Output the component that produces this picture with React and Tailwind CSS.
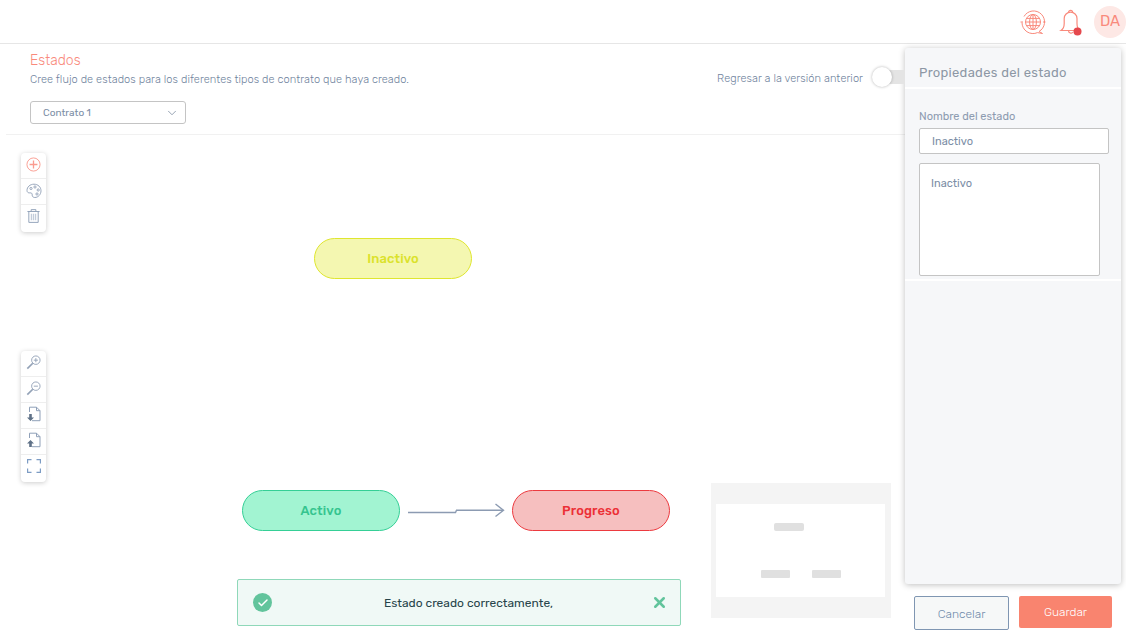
import { Check, ChevronDown, X } from "lucide-react";

const font = { fontFamily: "Rubik, Roboto, sans-serif" };

const GlobeIcon = () => (
  <svg width="26" height="26" viewBox="0 0 26 26" fill="none" stroke="#f98a7c" strokeWidth="1">
    <path d="M4 7.5 A11 11 0 1 1 19 22.5 L22.5 24.5 L17.5 23.6 A11 11 0 0 1 2 13.5" />
    <circle cx="13" cy="13" r="7.5" />
    <ellipse cx="13" cy="13" rx="3.4" ry="7.5" />
    <path d="M13 5.5v15M5.5 13h15M6.6 9.4h12.8M6.6 16.6h12.8M0.5 13h2.5M23 13h2.5" />
  </svg>
);

const BellIcon = () => (
  <svg width="24" height="28" viewBox="0 0 24 28" fill="none">
    <path d="M2 22.5c2.4-1.6 3.2-3.8 3.2-7V10.5a6.4 6.4 0 0 1 12.8 0v5c0 3 .8 5.4 2.8 7z" stroke="#f98a7c" strokeWidth="1.2" />
    <path d="M9.6 4.4a2 2 0 0 1 4 0M9.5 22.5a2.5 2.5 0 0 0 4.6 1.5" stroke="#f98a7c" strokeWidth="1.2" />
    <circle cx="18.5" cy="23.5" r="4" fill="#e5484d" />
  </svg>
);

const PlusIcon = () => (
  <svg width="15" height="15" viewBox="0 0 16 16" fill="none" stroke="#fa9c90" strokeWidth="1">
    <circle cx="8" cy="8" r="7" />
    <path d="M8 3.8v8.4M3.8 8h8.4" strokeWidth="1.4" />
  </svg>
);

const PaletteIcon = () => (
  <svg width="16" height="16" viewBox="0 0 16 16" fill="none" stroke="#9aa8bd" strokeWidth="1">
    <path d="M8 1.2c-4 0-7 2.7-7 6.3 0 1.8 1.4 2.6 2.8 2.4 1.6-.2 2.6.5 2.4 2-.1 1.4.8 2.6 2.6 2.6 3.4 0 6.2-3 6.2-6.7 0-3.7-2.9-6.6-7-6.6z" />
    <circle cx="5" cy="5.5" r="1.1" />
    <circle cx="9" cy="4" r="1.1" />
    <circle cx="12.2" cy="7" r="1.1" />
    <circle cx="11" cy="11" r="1.1" />
  </svg>
);

const TrashIcon = () => (
  <svg width="15" height="16" viewBox="0 0 16 16" fill="none" stroke="#8fa0b8" strokeWidth="1" className="-translate-y-px">
    <path d="M1.5 3.2h13M5.5 3V1.2h5V3M3 3.2v11.6h10V3.2" />
    <path d="M5.8 5.5v7M8 5.5v7M10.2 5.5v7" strokeWidth="1.4" stroke="#c2ccda" />
  </svg>
);

const ZoomIcon = ({ plus }) => (
  <svg width="15" height="15" viewBox="0 0 16 16" fill="none" stroke="#93a2b7" strokeWidth="1">
    <circle cx="10.5" cy="5.5" r="4.5" />
    <path d="M7.2 8.8 1.4 14.6" strokeWidth="1.8" />
    <path d="M8.3 5.5h4.4" />
    {plus && <path d="M10.5 3.3v4.4" />}
  </svg>
);

const FileArrowIcon = ({ up }) => (
  <svg width="16" height="16" viewBox="0 0 16 16" fill="none" className="-translate-y-px">
    <path d="M3.5 6V1.2h7l3.5 3.5v10H6M10.5 1.2v3.5H14" stroke="#8fa0b8" strokeWidth="1" />
    {up ? (
      <path d="M4.5 8 1 11.5h2.2V15h2.6v-3.5H8z" fill="#5f7187" />
    ) : (
      <path d="M4.5 15 1 11.5h2.2V8h2.6v3.5H8z" fill="#5f7187" />
    )}
  </svg>
);

const FitIcon = () => (
  <svg width="14" height="14" viewBox="0 0 14 14" fill="none" stroke="#7d9cc4" strokeWidth="1.2" className="-translate-y-px">
    <path d="M.6 4.5V.6h3.9M9.5.6h3.9v3.9M13.4 9.5v3.9H9.5M4.5 13.4H.6V9.5" />
  </svg>
);

const Toolbar = ({ className, items }) => (
  <div className={`absolute left-[21px] flex w-[25px] flex-col rounded-sm bg-white pb-[1px] shadow-[0_1px_5px_rgba(0,0,0,0.2)] ${className}`}>
    {items.map((item, i) => (
      <div key={i} className="flex h-[26px] items-center justify-center border-b border-[#eeeeee] pb-[2px] last:border-b-0">
        {item}
      </div>
    ))}
  </div>
);

const Node = ({ label, className }) => (
  <div className={`absolute flex h-[41px] w-[158px] items-center justify-center rounded-[21px] border pt-[1px] text-[13px] font-medium tracking-[0.1px] ${className}`}>
    {label}
  </div>
);

export default function App() {
  return (
    <div style={font} className="flex h-[641px] w-[1126px] flex-col overflow-hidden bg-white">
      {/* top bar */}
      <header className="flex h-[44px] shrink-0 items-center justify-end border-b border-[#e6e6e6]">
        <div className="mr-[13px]"><GlobeIcon /></div>
        <div className="mr-[11px]"><BellIcon /></div>
        <div className="flex h-[32px] w-[32px] items-center justify-center rounded-full bg-[#fde8e5] text-[15px] text-[#f98a7c]">DA</div>
      </header>

      <div className="flex min-h-0 flex-1">
        <main className="flex w-[905px] shrink-0 flex-col">
          <section className="ml-[6px] flex h-[91px] shrink-0 justify-between border-b border-[#f1f1f1] pl-[24px]">
            <div>
              <h1 className="mt-[8px] text-[14px] leading-[17px] font-light text-[#f98a7c]">Estados</h1>
              <p className="mt-[3px] text-[11px] leading-[16px] font-light tracking-[0.07px] text-[#6f839d]">Cree flujo de estados para los diferentes tipos de contrato que haya creado.</p>
              <div className="mt-[13px] flex h-[23px] w-[156px] items-center justify-between rounded-[3px] border border-[#c4c4c4] pt-[1px] pr-[6px] pl-[12px] text-[10px] text-[#7c8ea6]">
                Contrato 1
                <ChevronDown size={14} strokeWidth={1.2} className="text-[#6b7c93]" />
              </div>
            </div>
            <div className="mt-[22px] flex h-[22px] items-center">
              <span className="mt-[4px] mr-[9px] text-[11px] font-light tracking-[0.07px] text-[#6f839d]">Regresar a la versión anterior</span>
              <div className="relative h-[14px] w-[33px]">
                <div className="absolute top-0 right-0 h-[14px] w-[25px] rounded-l-full bg-[#e4e4e4]" />
                <div className="absolute top-[-3px] left-0 h-[20px] w-[20px] rounded-full bg-white shadow-[0_0_3px_rgba(0,0,0,0.3)]" />
              </div>
            </div>
          </section>

          {/* diagram canvas */}
          <section className="relative min-h-0 flex-1">
            <Toolbar className="top-[18px]" items={[<PlusIcon />, <PaletteIcon />, <TrashIcon />]} />
            <Toolbar
              className="top-[216px]"
              items={[<ZoomIcon plus />, <ZoomIcon />, <FileArrowIcon />, <FileArrowIcon up />, <FitIcon />]}
            />

            <Node label="Inactivo" className="top-[103px] left-[314px] border-[#dfe62f] bg-[#f4f7b1] text-[#dbe22c]" />
            <Node label="Activo" className="top-[355px] left-[242px] border-[#35cf96] bg-[#a2f4d2] text-[#35c48f]" />
            <Node label="Progreso" className="top-[355px] left-[512px] border-[#ec3a3f] bg-[#f6bfbf] text-[#ec2f36]" />

            <svg className="absolute top-[365px] left-[405px]" width="104" height="20" viewBox="0 0 104 20" fill="none" stroke="#8c9bb2" strokeWidth="1.4">
              <path d="M3 12.5h47.5l1-2.2h46.5" />
              <path d="M90.5 4 98.5 10.3 90.5 16.5" />
            </svg>

            {/* minimap */}
            <div className="absolute top-[348px] left-[711px] h-[135px] w-[180px] bg-[#f4f4f4]">
              <div className="relative mt-[21px] ml-[5px] h-[93px] w-[169px] bg-white">
                <div className="absolute top-[19px] left-[58px] h-[8px] w-[30px] rounded-[2px] bg-[#e0e0e0]" />
                <div className="absolute top-[66px] left-[45px] h-[8px] w-[29px] rounded-[1px] bg-[#e0e0e0]" />
                <div className="absolute top-[66px] left-[96px] h-[8px] w-[29px] rounded-[1px] bg-[#e0e0e0]" />
              </div>
            </div>

            {/* toast */}
            <div className="absolute top-[444px] left-[237px] flex h-[47px] w-[444px] items-center rounded-[2px] border border-[#8fd8b9] bg-[#f0f9f6] pr-[12px] pl-[15px]">
              <div className="flex h-[19px] w-[19px] items-center justify-center rounded-full bg-[#62c49c]">
                <Check size={12} strokeWidth={3} className="text-white" />
              </div>
              <span className="ml-[14px] flex-1 text-center text-[12px] text-[#27444a]">Estado creado correctamente,</span>
              <X size={17} strokeWidth={3.6} className="text-[#62c49c]" />
            </div>
          </section>
        </main>

        <aside className="flex w-[221px] shrink-0 flex-col">
          <div className="mt-[4px] flex h-[536px] w-[216px] flex-col rounded-[3px] bg-[#f6f7f9] shadow-[0_1px_6px_rgba(0,0,0,0.25)]">
            <div className="flex h-[41px] shrink-0 items-center border-b-2 border-white pt-[10px] pl-[14px] text-[13px] tracking-[0.3px] text-[#8d97a5]">
              Propiedades del estado
            </div>
            <div className="flex flex-col border-b-2 border-white pr-[12px] pb-[3px] pl-[14px]">
              <label className="mt-[20px] text-[11px] leading-[16px] text-[#8d9bb0]">Nombre del estado</label>
              <div className="mt-[3px] flex h-[26px] w-[190px] items-center rounded-[2px] border border-[#c4c4c4] bg-white pt-[3px] pl-[12px] text-[11px] text-[#7c8ea6]">Inactivo</div>
              <div className="mt-[9px] h-[113px] w-[181px] rounded-[2px] border border-[#c4c4c4] bg-white pt-[12px] pl-[11px] text-[11px] leading-[16px] text-[#7c8ea6]">Inactivo</div>
            </div>
          </div>
          <div className="mt-[12px] flex items-start">
            <button className="ml-[9px] h-[34px] w-[95px] rounded-[2px] border border-[#7f96b2] bg-[#f6f8f8] pt-[1px] text-[12px] font-light text-[#6f8bab]">Cancelar</button>
            <button className="ml-[10px] h-[32px] w-[93px] rounded-[2px] bg-[#f9846f] text-[12px] font-light text-white">Guardar</button>
          </div>
        </aside>
      </div>
    </div>
  );
}
